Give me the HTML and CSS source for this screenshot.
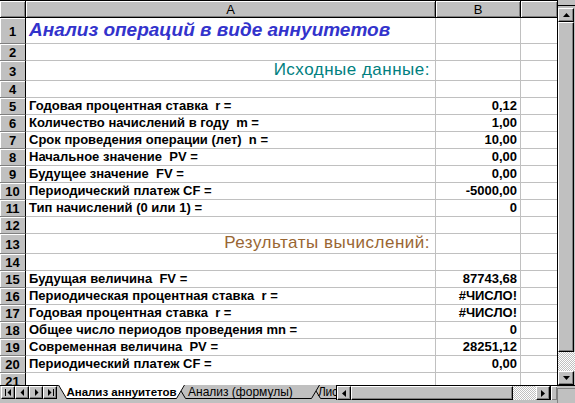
FILE: index.html
```html
<!DOCTYPE html>
<html lang="ru">
<head>
<meta charset="utf-8">
<title>Анализ аннуитетов</title>
<link rel="stylesheet" href="styles.css">
</head>
<body>
<div class="window">
  <div class="main">
    <div class="sheet">
      <div class="corner"></div><div class="ch">A</div><div class="ch">B</div><div class="ch last"></div>

      <div class="rh">1</div><div class="c a title">Анализ операций в виде аннуитетов</div><div class="c b"></div><div class="c cc"></div>
      <div class="rh">2</div><div class="c a"></div><div class="c b"></div><div class="c cc"></div>
      <div class="rh">3</div><div class="c a head teal">Исходные данные:</div><div class="c b"></div><div class="c cc"></div>
      <div class="rh">4</div><div class="c a"></div><div class="c b"></div><div class="c cc"></div>
      <div class="rh">5</div><div class="c a">Годовая процентная ставка&nbsp; r =</div><div class="c b">0,12</div><div class="c cc"></div>
      <div class="rh">6</div><div class="c a">Количество начислений в году&nbsp; m =</div><div class="c b">1,00</div><div class="c cc"></div>
      <div class="rh">7</div><div class="c a">Срок проведения операции (лет)&nbsp; n =</div><div class="c b">10,00</div><div class="c cc"></div>
      <div class="rh">8</div><div class="c a">Начальное значение&nbsp; PV =</div><div class="c b">0,00</div><div class="c cc"></div>
      <div class="rh">9</div><div class="c a">Будущее значение&nbsp; FV =</div><div class="c b">0,00</div><div class="c cc"></div>
      <div class="rh">10</div><div class="c a">Периодический платеж CF =</div><div class="c b">-5000,00</div><div class="c cc"></div>
      <div class="rh">11</div><div class="c a">Тип начислений (0 или 1) =</div><div class="c b">0</div><div class="c cc"></div>
      <div class="rh">12</div><div class="c a"></div><div class="c b"></div><div class="c cc"></div>
      <div class="rh">13</div><div class="c a head brown">Результаты вычислений:</div><div class="c b"></div><div class="c cc"></div>
      <div class="rh">14</div><div class="c a"></div><div class="c b"></div><div class="c cc"></div>
      <div class="rh">15</div><div class="c a">Будущая величина&nbsp; FV =</div><div class="c b">87743,68</div><div class="c cc"></div>
      <div class="rh">16</div><div class="c a">Периодическая процентная ставка&nbsp; r =</div><div class="c b">#ЧИСЛО!</div><div class="c cc"></div>
      <div class="rh">17</div><div class="c a">Годовая процентная ставка&nbsp; r =</div><div class="c b">#ЧИСЛО!</div><div class="c cc"></div>
      <div class="rh">18</div><div class="c a">Общее число периодов проведения mn =</div><div class="c b">0</div><div class="c cc"></div>
      <div class="rh">19</div><div class="c a">Современная величина&nbsp; PV =</div><div class="c b">28251,12</div><div class="c cc"></div>
      <div class="rh">20</div><div class="c a">Периодический платеж CF =</div><div class="c b">0,00</div><div class="c cc"></div>
      <div class="rh">21</div><div class="c a"></div><div class="c b"></div><div class="c cc"></div>
    </div>
    <div class="vscroll">
      <div class="vsplit"></div>
      <div class="btn vbtn up"><svg width="7" height="4" viewBox="0 0 7 4"><polygon points="3.5,0 7,4 0,4" fill="#000"/></svg></div>
      <div class="thumb vthumb"></div>
      <div class="dither vdither"></div>
      <div class="btn vbtn down"><svg width="7" height="4" viewBox="0 0 7 4"><polygon points="0,0 7,0 3.5,4" fill="#000"/></svg></div>
    </div>
  </div>
  <div class="bottom">
    <div class="nav">
      <div class="btn nbtn"><svg width="7" height="7" viewBox="0 0 7 7"><rect x="0" y="0" width="1" height="7" fill="#000"/><polygon points="6,0 6,7 2.5,3.5" fill="#000"/></svg></div>
      <div class="btn nbtn"><svg width="5" height="7" viewBox="0 0 5 7"><polygon points="4,0 4,7 0.5,3.5" fill="#000"/></svg></div>
      <div class="btn nbtn"><svg width="5" height="7" viewBox="0 0 5 7"><polygon points="1,0 1,7 4.5,3.5" fill="#000"/></svg></div>
      <div class="btn nbtn"><svg width="7" height="7" viewBox="0 0 7 7"><polygon points="1,0 1,7 4.5,3.5" fill="#000"/><rect x="6" y="0" width="1" height="7" fill="#000"/></svg></div>
    </div>
    <div class="tabs">
      <div class="tab active">
        <svg class="tabshape" width="127" height="14" viewBox="0 0 127 14"><polygon points="0,0 8,13 119,13 127,0" fill="#fff"/><polyline points="0.5,0 8.5,13.5 118.5,13.5 126.5,0" fill="none" stroke="#000"/></svg>
        <span class="tablabel">Анализ аннуитетов</span>
      </div>
      <div class="tab second">
        <svg class="tabshape" width="143" height="14" viewBox="0 0 143 14"><polygon points="0,0 8,13 135,13 143,0" fill="#c0c0c0"/><polyline points="0.5,0 8.5,13.5 134.5,13.5 142.5,0" fill="none" stroke="#000"/></svg>
        <span class="tablabel">Анализ (формулы)</span>
      </div>
      <div class="tab third">
        <svg class="tabshape" width="30" height="14" viewBox="0 0 30 14"><polygon points="0,0 8,13 30,13 30,0" fill="#c0c0c0"/><polyline points="0.5,0 8.5,13.5 30,13.5" fill="none" stroke="#000"/></svg>
        <span class="tablabel">Лис</span>
      </div>
    </div>
    <div class="hscroll">
      <div class="btn hbtn"><svg width="4" height="7" viewBox="0 0 4 7"><polygon points="4,0 4,7 0,3.5" fill="#000"/></svg></div>
      <div class="thumb hthumb"></div>
      <div class="dither hdither"></div>
      <div class="btn hbtn"><svg width="4" height="7" viewBox="0 0 4 7"><polygon points="0,0 0,7 4,3.5" fill="#000"/></svg></div>
      <div class="hsplit"></div>
    </div>
    <div class="corner2"></div>
  </div>
</div>
</body>
</html>
```
FILE: styles.css
```css
html, body {
  margin: 0;
  padding: 0;
  background: #c0c0c0;
}
.window {
  width: 575px;
  height: 403px;
  overflow: hidden;
  background: #c0c0c0;
  display: flex;
  flex-direction: column;
  font-family: "Liberation Sans", Arial, sans-serif;
}
.main {
  display: flex;
  height: 385px;
  flex: none;
}
.sheet {
  width: 557px;
  height: 385px;
  overflow: hidden;
  display: grid;
  grid-template-columns: 26px 410px 85px 36px;
  grid-template-rows: 18px 26px 17px 20px 17px repeat(8, 17px) 20px repeat(8, 17px);
  background: #fff;
}
.corner, .ch {
  box-sizing: border-box;
  background: #c0c0c0;
  border-top: 1px solid #000;
  border-right: 1px solid #000;
  border-bottom: 1px solid #000;
  box-shadow: inset 1px 1px #fff, inset -1px -1px #808080;
  font-size: 13px;
  color: #000;
  display: flex;
  align-items: center;
  justify-content: center;
}
.ch.last {
  border-right: none;
}
.rh {
  box-sizing: border-box;
  background: #c0c0c0;
  border-right: 1px solid #000;
  border-bottom: 1px solid #808080;
  box-shadow: inset 1px 1px #fff;
  font-weight: bold;
  font-size: 13px;
  color: #000;
  display: flex;
  align-items: center;
  justify-content: center;
  padding-top: 1px;
  overflow: hidden;
}
.c {
  box-sizing: border-box;
  border-right: 1px solid #c0c0c0;
  border-bottom: 1px solid #c0c0c0;
  background: #fff;
  font-weight: bold;
  font-size: 13px;
  line-height: 15px;
  color: #000;
  display: flex;
  align-items: flex-end;
  white-space: nowrap;
  overflow: visible;
}
.c.cc {
  border-right: none;
}
.a {
  padding-left: 3px;
  padding-bottom: 1px;
}
.b {
  justify-content: flex-end;
  padding-right: 3px;
  padding-bottom: 1px;
}
.title {
  font-style: italic;
  font-size: 19px;
  line-height: 24px;
  color: #3333cc;
  padding-left: 3px;
  padding-bottom: 1px;
}
.head {
  justify-content: flex-end;
  font-weight: normal;
  font-size: 17px;
  letter-spacing: 0.5px;
  line-height: 18px;
  padding-right: 5px;
  padding-bottom: 1px;
}
.teal { color: #008080; }
.brown { color: #996633; }

.btn {
  box-sizing: border-box;
  background: #c0c0c0;
  border: 1px solid;
  border-color: #fff #000 #000 #fff;
  box-shadow: inset -1px -1px #808080;
  display: flex;
  align-items: center;
  justify-content: center;
  flex: none;
}
.btn svg { display: block; }
.thumb {
  box-sizing: border-box;
  background: #c0c0c0;
  border: 1px solid;
  border-color: #fff #000 #000 #fff;
  box-shadow: inset -1px -1px #808080;
}
.dither {
  background: repeating-conic-gradient(#c0c0c0 0 25%, #fff 0 50%) 0 0 / 2px 2px;
}

.vscroll {
  box-sizing: border-box;
  width: 18px;
  height: 385px;
  border-left: 1px solid #000;
  display: flex;
  flex-direction: column;
  background: #c0c0c0;
}
.vsplit {
  height: 8px;
  flex: none;
  background: linear-gradient(#c0c0c0 0 5px, #000 5px 6px, #c0c0c0 6px);
}
.vbtn {
  height: 14px;
  width: 16px;
}
.vthumb {
  height: 330px;
  width: 16px;
  flex: none;
}
.vdither {
  flex: 1;
}

.bottom {
  height: 18px;
  flex: none;
  display: flex;
  align-items: flex-start;
  border-top: 1px solid #000;
  box-sizing: border-box;
}
.nav {
  display: flex;
  width: 57px;
  padding-left: 1px;
  box-sizing: border-box;
  flex: none;
}
.nbtn {
  width: 14px;
  height: 13px;
}
.tabs {
  width: 279px;
  height: 14px;
  flex: none;
  display: flex;
  overflow: hidden;
  margin-top: -1px;
}
.tab {
  position: relative;
  height: 14px;
  flex: none;
  display: flex;
  align-items: center;
  font-size: 12px;
  color: #000;
  white-space: nowrap;
}
.tabshape {
  position: absolute;
  left: 0;
  top: 0;
}
.tablabel {
  position: relative;
}
.tab.active {
  width: 127px;
  margin-left: 1px;
  z-index: 3;
  justify-content: center;
  font-weight: bold;
  font-size: 11.5px;
}
.tab.second {
  width: 143px;
  margin-left: -8px;
  z-index: 2;
  padding-left: 11px;
  box-sizing: border-box;
}
.tab.third {
  width: 30px;
  margin-left: -8px;
  z-index: 1;
  padding-left: 6px;
  box-sizing: border-box;
  letter-spacing: -0.3px;
}
.hscroll {
  width: 221px;
  height: 14px;
  flex: none;
  display: flex;
  border-left: 1px solid #000;
  box-sizing: border-box;
}
.hbtn {
  width: 14px;
  height: 14px;
}
.hthumb {
  width: 162px;
  height: 14px;
  flex: none;
}
.hdither {
  width: 23px;
  height: 14px;
  flex: none;
}
.hsplit {
  width: 7px;
  height: 14px;
  box-sizing: border-box;
  border-left: 1px solid #000;
  box-shadow: inset 1px 1px #fff, inset -1px -1px #808080;
}
.corner2 {
  width: 18px;
  height: 17px;
  box-sizing: border-box;
  border-left: 1px solid #808080;
  border-top: 1px solid #808080;
  margin-top: 2px;
}
```
